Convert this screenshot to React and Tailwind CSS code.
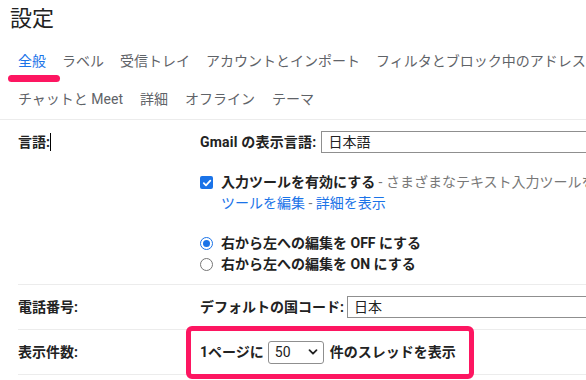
import React from 'react';

const tabsTop = ['全般', 'ラベル', '受信トレイ', 'アカウントとインポート', 'フィルタとブロック中のアドレス'];
const tabsBottom = ['チャットと Meet', '詳細', 'オフライン', 'テーマ'];

const Checkbox = () => (
  <span className="w-[13px] h-[13px] rounded-[2px] bg-[#1a73e8] flex items-center justify-center shrink-0">
    <svg width="10" height="10" viewBox="0 0 10 10">
      <path d="M1.8 5.2 L4 7.3 L8.3 2.6" fill="none" stroke="white" strokeWidth="1.8" strokeLinecap="round" strokeLinejoin="round" />
    </svg>
  </span>
);

const Radio = ({ checked }) => (
  <span
    className={
      checked
        ? 'w-[13px] h-[13px] rounded-full border border-[#1a73e8] flex items-center justify-center shrink-0'
        : 'w-[13px] h-[13px] rounded-full border border-[#767676] shrink-0'
    }
  >
    {checked && <span className="w-[7px] h-[7px] rounded-full bg-[#1a73e8]" />}
  </span>
);

export default function App() {
  return (
    <div className="relative w-[586px] h-[380px] overflow-hidden bg-white text-[14px] text-[#222] font-['Roboto','Noto_Sans_CJK_JP',sans-serif]">
      <div className="h-[42px] pl-[10px] pt-[5px] text-[22px] leading-[28px]">設定</div>

      <div className="h-[38px] flex items-center gap-4 pl-[18px] whitespace-nowrap text-[#5f6368]">
        {tabsTop.map((t, i) => (
          <span key={t} className={i === 0 ? 'relative text-[#1a73e8]' : ''}>
            {t}
            {i === 0 && <span className="absolute left-[-10px] top-[24px] w-[52px] h-[7px] rounded-full bg-[#fd1661]" />}
          </span>
        ))}
      </div>
      <div className="h-[40px] flex items-center gap-[17px] pl-[18px] whitespace-nowrap text-[#5f6368] border-b border-[#ececec]">
        {tabsBottom.map((t) => (
          <span key={t}>{t}</span>
        ))}
      </div>

      <div className="ml-[18px]">
        <div className="grid grid-cols-[182px_1fr] items-start border-b border-[#ececec] pt-[11px] pb-[9px]">
          <div className="font-bold h-[22px] flex items-center">
            言語:<span className="w-px h-[18px] bg-black" />
          </div>
          <div className="whitespace-nowrap">
            <div className="flex items-center h-[22px]">
              <span className="font-bold mr-[5px] tracking-[0.2px]">Gmail の表示言語:</span>
              <div className="flex-1 h-[22px] border border-r-0 border-[#8f8f8f] pl-[6px] leading-[20px]">日本語</div>
            </div>
            <div className="mt-[19px] leading-[21px]">
              <div className="flex items-center gap-[8px]">
                <Checkbox />
                <span>
                  <span className="font-bold">入力ツールを有効にする</span>
                  <span className="text-[#777]"> - さまざまなテキスト入力ツールを使用して入力できます -</span>
                </span>
              </div>
              <div className="pl-[21px] text-[#1a73e8]">
                ツールを編集 <span className="text-[#777]">-</span> 詳細を表示
              </div>
            </div>
            <div className="mt-[19px] leading-[21px] font-bold">
              <div className="flex items-center gap-[8px]">
                <Radio checked />
                <span>右から左への編集を OFF にする</span>
              </div>
              <div className="flex items-center gap-[8px]">
                <Radio />
                <span>右から左への編集を ON にする</span>
              </div>
            </div>
          </div>
        </div>

        <div className="grid grid-cols-[182px_1fr] items-center h-[45px] border-b border-[#ececec]">
          <div className="font-bold">電話番号:</div>
          <div className="flex items-center whitespace-nowrap">
            <span className="font-bold mr-[3px]">デフォルトの国コード:</span>
            <div className="flex-1 h-[22px] border border-r-0 border-[#8f8f8f] pl-[6px] leading-[20px]">日本</div>
          </div>
        </div>

        <div className="grid grid-cols-[182px_1fr] items-center h-[45px] border-b border-[#ececec]">
          <div className="font-bold">表示件数:</div>
          <div className="flex items-center whitespace-nowrap font-bold">
            <span>1ページに</span>
            <div className="ml-[4px] mr-[6px] w-[56px] h-[23px] border border-[#8f8f8f] rounded-[3px] flex items-center justify-between pl-[6px] pr-[5px] font-normal">
              <span>50</span>
              <svg width="10" height="10" viewBox="0 0 10 10">
                <path d="M1.5 3.2 L5 6.7 L8.5 3.2" fill="none" stroke="#222" strokeWidth="1.8" strokeLinecap="round" strokeLinejoin="round" />
              </svg>
            </div>
            <span>件のスレッドを表示</span>
          </div>
        </div>
      </div>

      <div className="absolute left-[186px] top-[326px] w-[288px] h-[53px] border-[5px] border-[#fd1661] rounded-[6px]" />
    </div>
  );
}
